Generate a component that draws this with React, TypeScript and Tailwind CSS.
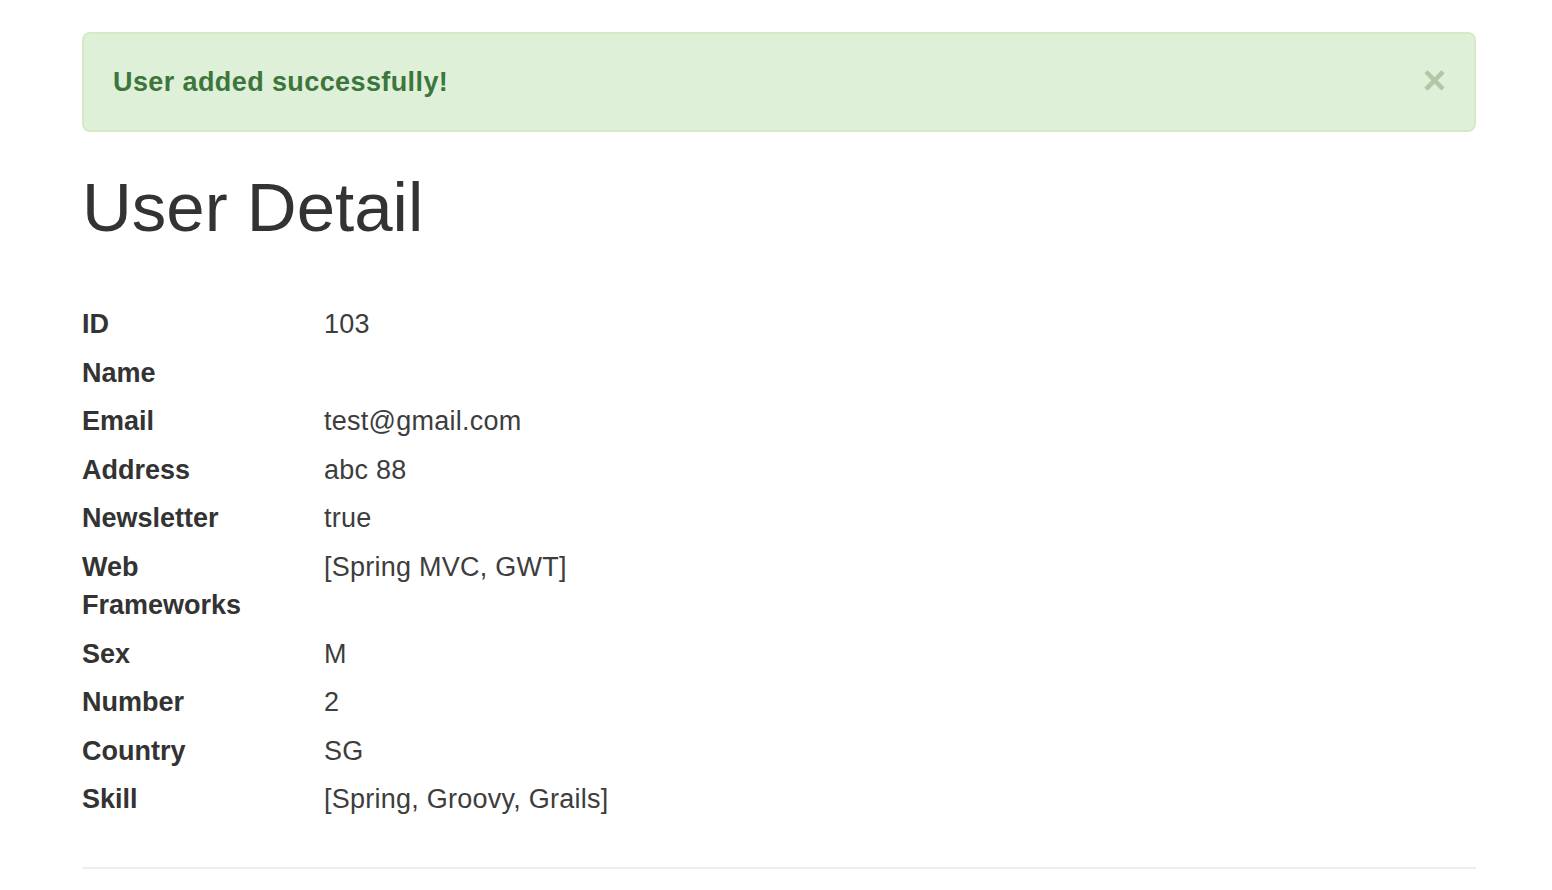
const rows: [string, string][] = [
  ["ID", "103"],
  ["Name", ""],
  ["Email", "test@gmail.com"],
  ["Address", "abc 88"],
  ["Newsletter", "true"],
  ["Web Frameworks", "[Spring MVC, GWT]"],
  ["Sex", "M"],
  ["Number", "2"],
  ["Country", "SG"],
  ["Skill", "[Spring, Groovy, Grails]"],
];

export default function App() {
  return (
    <div className="min-h-screen bg-white font-['Liberation_Sans',Arial,sans-serif] text-[#333]">
      <div className="pl-[82px] pr-[76px] pt-[32px] pb-[20px]">
        {/* alert */}
        <div className="flex h-[100px] items-center justify-between rounded-[8px] border-2 border-[#d6e9c6] bg-[#dff0d8] pl-[29px] pr-[28px]">
          <span className="text-[27px] font-bold tracking-[0.4px] text-[#3c763d]">User added successfully!</span>
          <button className="-mt-[4px] text-[40px] font-bold leading-none text-[#b0c7a8]">×</button>
        </div>

        <h1 className="mt-[38px] mb-[59px] h-[76px] text-[69px] leading-[76px] font-normal">User Detail</h1>

        {/* detail rows */}
        <div className="grid grid-cols-[242px_1fr] gap-y-[10px] text-[27px] leading-[38.5px]">
          {rows.map(([label, value]) => (
            <div key={label} className="contents">
              <div className="pr-[32px] font-bold">{label}</div>
              <div className="tracking-[0.25px] text-[#3d3d3d]">{value}</div>
            </div>
          ))}
        </div>

        <hr className="mt-[48px] border-0 border-t-2 border-[#eee]" />
      </div>
    </div>
  );
}
